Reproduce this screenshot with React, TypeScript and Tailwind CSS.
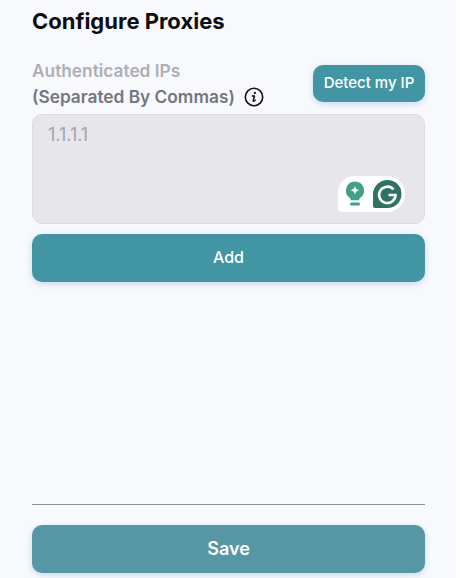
function InfoIcon() {
  return (
    <svg className="ml-[9px]" width="20" height="20" viewBox="0 0 20 20" fill="none">
      <circle cx="10" cy="10" r="8.700" stroke="#111111" strokeWidth="1.600" />
      <circle cx="10.900" cy="5.900" r="1.100" fill="#111111" />
      <path d="M8.200 9h2.300l-1.300 4.600c-.2.800.7 1 2-.3" stroke="#111111" strokeWidth="1.500" strokeLinecap="round" strokeLinejoin="round" />
    </svg>
  );
}

function GrammarlyBadge() {
  return (
    <div className="absolute right-[19px] bottom-[11px] flex h-[36px] w-[67px] items-center justify-between rounded-tl-[16px] rounded-bl-[4px] rounded-r-[18px] bg-white pl-[7px] pr-[2px]">
      <svg width="20" height="27" viewBox="0 0 20 27">
        <path d="M10 .5a9 9 0 0 0-5.400 16.200c.9.700 1.200 1.400 1.200 2.600h8.400c0-1.200.3-1.900 1.200-2.600A9 9 0 0 0 10 .5z" fill="#43a088" />
        <path d="M10 4.500c.5 3 1.500 4 4.500 4.700-3 .7-4 1.700-4.500 4.800-.5-3.100-1.500-4.100-4.500-4.800 3-.7 4-1.700 4.500-4.700z" fill="#ffffff" />
        <rect x="5" y="21.500" width="10" height="3" rx="1.500" fill="#43a088" />
      </svg>
      <svg width="31" height="31" viewBox="0 0 31 31">
        <path d="M15.500 1a14 14 0 1 1 0 28H3a2 2 0 0 1-2-2V15.500A14.500 14.500 0 0 1 15.500 1z" fill="#2e7361" />
        <path d="M21.500 10.500A8.200 8.200 0 1 0 23.500 16h-7" fill="none" stroke="#ffffff" strokeWidth="2.600" />
      </svg>
    </div>
  );
}

export default function App() {
  return (
    <div className="h-[578px] w-[460px] overflow-hidden bg-white font-['Inter',sans-serif]">
      <div className="flex h-full w-[456px] flex-col bg-[#f8f9fc] pl-8 pr-[31px]">
        <h1 className="mt-[7px] text-[22px] leading-[28px] font-bold text-[#0b0c10]">Configure Proxies</h1>

        <div className="mt-[23px] flex items-start justify-between">
          <div className="text-[17.3px] leading-[26px] font-semibold">
            <div className="text-[#adaeb9]">Authenticated IPs</div>
            <div className="flex items-center text-[#74767f]">
              (Separated By Commas)
              <InfoIcon />
            </div>
          </div>
          <button className="mt-[7px] h-[37px] w-[112px] rounded-[10px] bg-[#4296a4] pb-[1px] text-[15px] font-medium text-white shadow-[0_2px_6px_rgba(65,120,200,0.25)]">
            Detect my IP
          </button>
        </div>

        <div className="relative mt-[4px] h-[110px] rounded-[10px] border border-[#dcdde2] bg-[#e6e6eb] px-[15px] pt-[7px] text-[18px] leading-[26px] text-[#a4a5ad]">
          1.1.1.1
          <GrammarlyBadge />
        </div>

        <button className="mt-[10px] h-[48px] rounded-[10px] bg-[#4296a4] pb-[2px] text-[16px] font-medium text-white shadow-[0_2px_6px_rgba(65,120,200,0.25)]">
          Add
        </button>

        <div className="mt-[222px] border-t border-[#8f9094]" />

        <button className="mt-[20px] h-[48px] rounded-[10px] bg-[#5796a5] pb-[2px] text-[18px] font-semibold text-white shadow-[0_2px_6px_rgba(65,120,200,0.25)]">
          Save
        </button>
      </div>
    </div>
  );
}
